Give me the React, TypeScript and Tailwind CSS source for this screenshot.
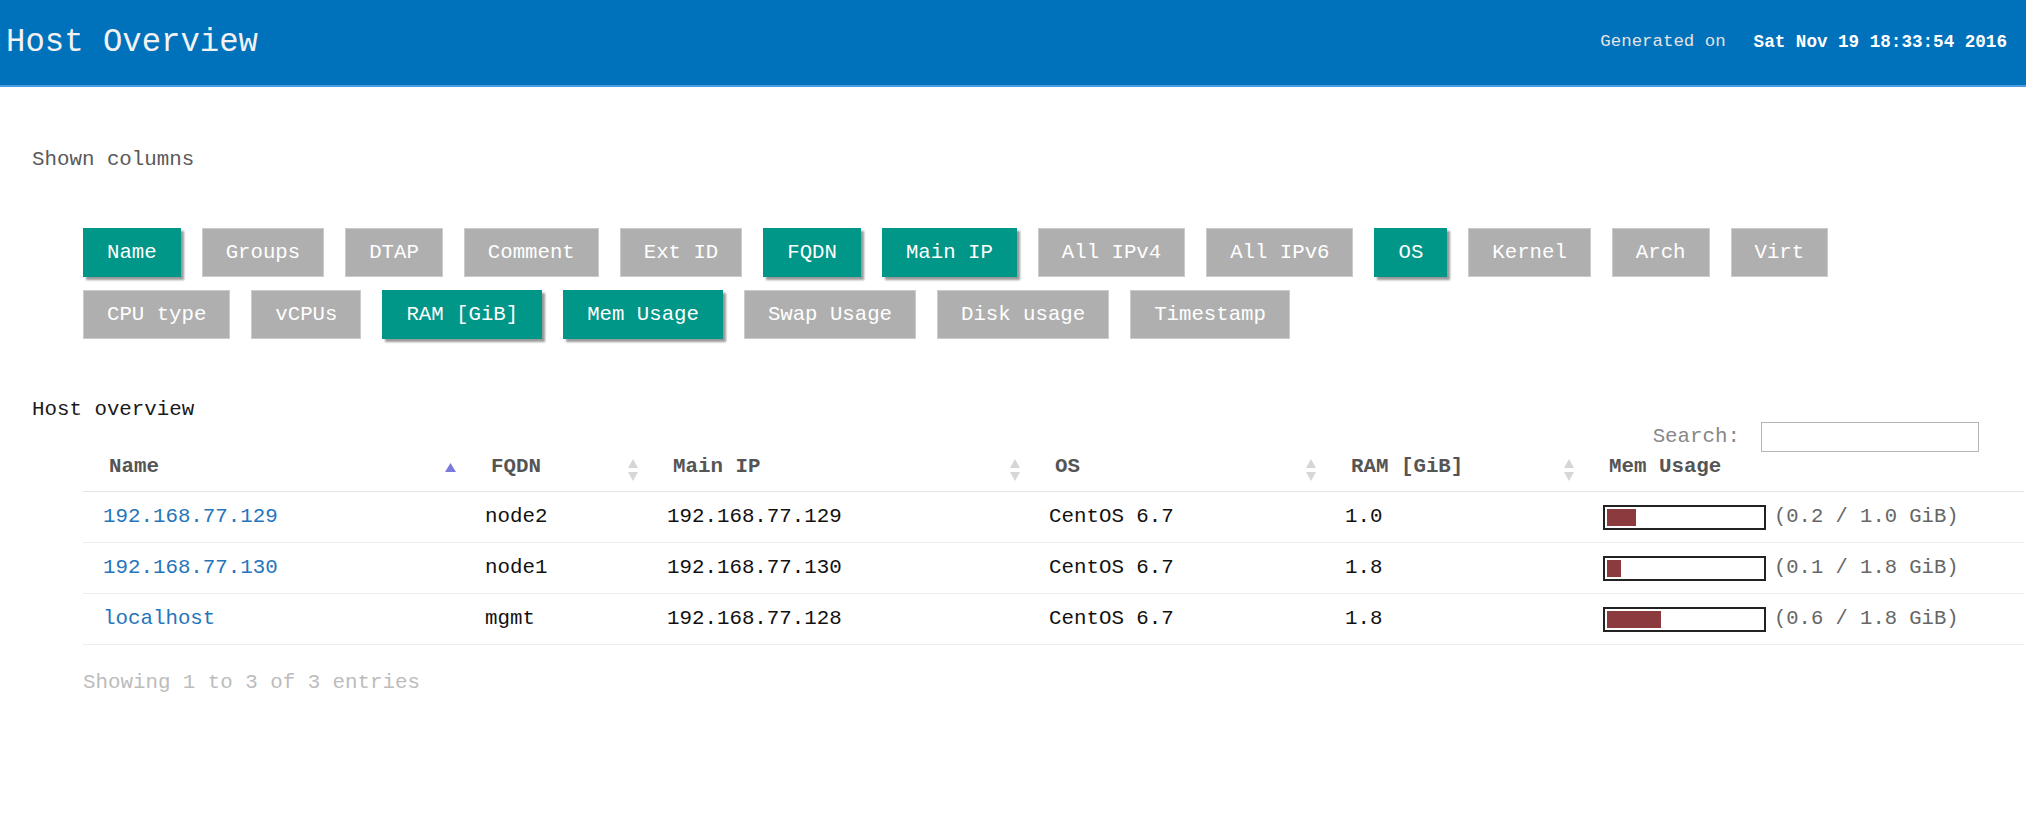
import React from 'react'

const columns = [
  { label: 'Name', on: true },
  { label: 'Groups', on: false },
  { label: 'DTAP', on: false },
  { label: 'Comment', on: false },
  { label: 'Ext ID', on: false },
  { label: 'FQDN', on: true },
  { label: 'Main IP', on: true },
  { label: 'All IPv4', on: false },
  { label: 'All IPv6', on: false },
  { label: 'OS', on: true },
  { label: 'Kernel', on: false },
  { label: 'Arch', on: false },
  { label: 'Virt', on: false },
  { label: 'CPU type', on: false },
  { label: 'vCPUs', on: false },
  { label: 'RAM [GiB]', on: true },
  { label: 'Mem Usage', on: true },
  { label: 'Swap Usage', on: false },
  { label: 'Disk usage', on: false },
  { label: 'Timestamp', on: false },
]

const hosts = [
  { name: '192.168.77.129', fqdn: 'node2', ip: '192.168.77.129', os: 'CentOS 6.7', ram: '1.0', used: 29, mem: '(0.2 / 1.0 GiB)' },
  { name: '192.168.77.130', fqdn: 'node1', ip: '192.168.77.130', os: 'CentOS 6.7', ram: '1.8', used: 14, mem: '(0.1 / 1.8 GiB)' },
  { name: 'localhost', fqdn: 'mgmt', ip: '192.168.77.128', os: 'CentOS 6.7', ram: '1.8', used: 54, mem: '(0.6 / 1.8 GiB)' },
]

const SortBoth = () => (
  <svg width="10" height="22" viewBox="0 0 10 22" className="shrink-0 translate-y-[3px]">
    <path d="M5 0 L10 9 L0 9 Z" fill="#d6d6d6" />
    <path d="M0 13 L10 13 L5 22 Z" fill="#d6d6d6" />
  </svg>
)

const SortAsc = () => (
  <svg width="11" height="9" viewBox="0 0 11 9" className="shrink-0">
    <path d="M5.5 0 L11 9 L0 9 Z" fill="#7b7bd9" />
  </svg>
)

const HeadCell: React.FC<{ label: string; sort?: 'asc' | 'both' | 'none' }> = ({ label, sort = 'both' }) => (
  <th className="border-b border-[#e6e6e6] pt-[3px] pb-[12px] pl-[26px] pr-[9px] text-left font-bold text-[#555] leading-[24px]">
    <div className="flex items-center justify-between">
      <span>{label}</span>
      {sort === 'asc' && <SortAsc />}
      {sort === 'both' && <SortBoth />}
    </div>
  </th>
)

export default function App() {
  return (
    <div className="min-h-[822px] bg-white font-['Liberation_Mono',monospace] text-[20.8px] leading-[24px] text-[#111]">
      {/* Top bar */}
      <header className="flex h-[87px] items-center justify-between border-b-2 border-[#4a9be0] bg-[#0071bb] pl-[6px] pr-[19px]">
        <h1 className="text-[32.3px] leading-[40px] font-normal text-[#f2f2f2]">Host Overview</h1>
        <div className="-mt-[2px] flex items-center gap-[28px] text-[#e4e4e4]">
          <span className="text-[17.4px]">Generated on</span>
          <span className="text-[17.6px] font-bold text-white">Sat Nov 19 18:33:54 2016</span>
        </div>
      </header>

      <main className="pl-[32px] pr-[2px]">
        <div className="mt-[61px] text-[#5a5a5a]">Shown columns</div>

        {/* Column toggles */}
        <div className="mt-[56px] ml-[51px] flex max-w-[1790px] flex-wrap gap-x-[21px] gap-y-[13px]">
          {columns.map((c) => (
            <button
              key={c.label}
              className={`h-[49px] border px-[23px] text-[20.7px] text-white leading-[24px] ${
                c.on
                  ? 'border-[#009688] bg-[#009688] shadow-[3px_3px_2px_#9a9a9a]'
                  : 'border-[#cbcbcb] bg-[#afafaf]'
              }`}
            >
              {c.label}
            </button>
          ))}
        </div>

        <div className="mt-[59px] text-[#1a1a1a]">Host overview</div>

        {/* Table */}
        <div className="ml-[51px]">
          <div className="flex items-center justify-end gap-[21px] pr-[45px]">
            <label className="text-[#888]">Search:</label>
            <input className="h-[30px] w-[218px] border border-[#b5b5b5] bg-white outline-none" />
          </div>

          <table className="w-full table-fixed border-collapse">
            <colgroup>
              <col className="w-[382px]" />
              <col className="w-[182px]" />
              <col className="w-[382px]" />
              <col className="w-[296px]" />
              <col className="w-[258px]" />
              <col />
            </colgroup>
            <thead>
              <tr>
                <HeadCell label="Name" sort="asc" />
                <HeadCell label="FQDN" />
                <HeadCell label="Main IP" />
                <HeadCell label="OS" />
                <HeadCell label="RAM [GiB]" />
                <HeadCell label="Mem Usage" sort="none" />
              </tr>
            </thead>
            <tbody>
              {hosts.map((h) => (
                <tr key={h.name} className="h-[51px] border-b border-[#ececec]">
                  <td className="pl-[20px]">
                    <a className="text-[#2675bb]">{h.name}</a>
                  </td>
                  <td className="pl-[20px]">{h.fqdn}</td>
                  <td className="pl-[20px]">{h.ip}</td>
                  <td className="pl-[20px]">{h.os}</td>
                  <td className="pl-[20px]">{h.ram}</td>
                  <td className="pl-[20px]">
                    <div className="flex items-center gap-[8px]">
                      <div className="h-[25px] w-[163px] border-2 border-[#222] bg-white p-[2px]">
                        <div className="h-full bg-[#8b3a3e]" style={{ width: h.used }} />
                      </div>
                      <span className="text-[20.5px] text-[#666]">{h.mem}</span>
                    </div>
                  </td>
                </tr>
              ))}
            </tbody>
          </table>

          <div className="mt-[26px] text-[#bcbcbc]">Showing 1 to 3 of 3 entries</div>
        </div>
      </main>
    </div>
  )
}
